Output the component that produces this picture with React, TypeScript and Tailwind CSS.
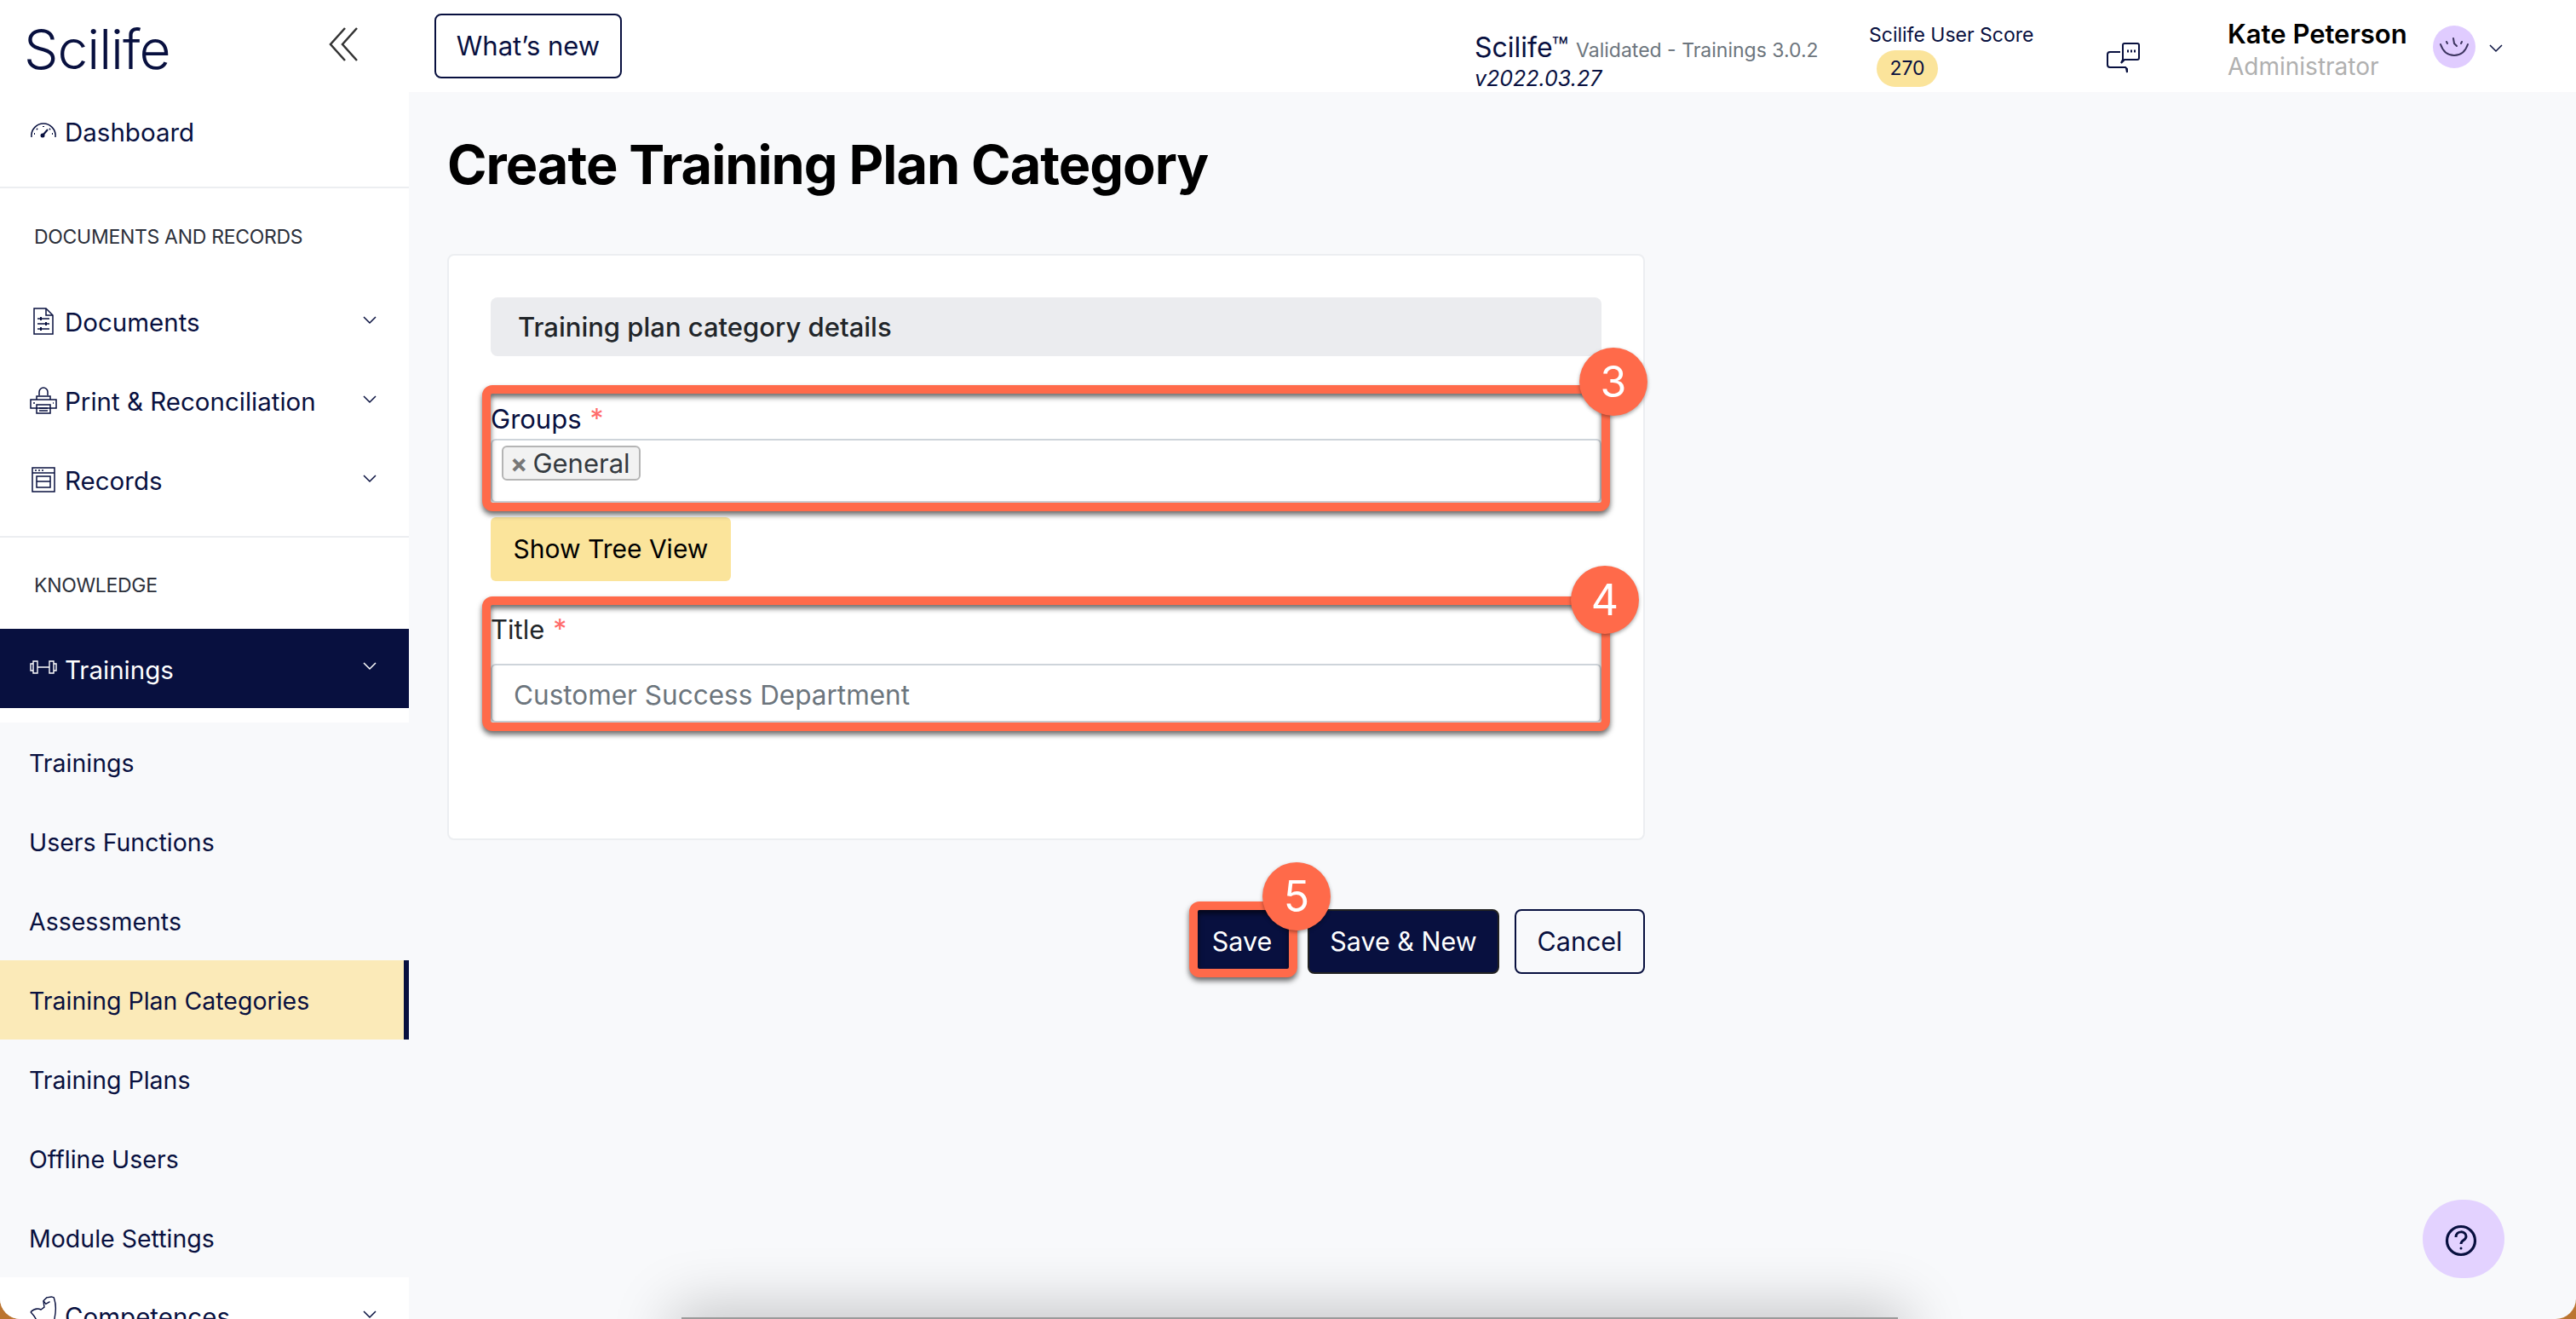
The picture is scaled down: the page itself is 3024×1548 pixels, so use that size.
import type { ReactNode } from "react";

const NAVY = "#08103f";

function Chevron({ className = "" }: { className?: string }) {
  return (
    <svg width="16" height="10" viewBox="0 0 16 10" fill="none" className={className}>
      <path d="M1 1l7 7 7-7" stroke="currentColor" strokeWidth="1.5" />
    </svg>
  );
}

function GaugeIcon() {
  return (
    <svg width="32" height="20" viewBox="0 0 32 20" fill="none" stroke={NAVY} strokeWidth="1.5">
      <path d="M2 18C1 9 8 2 16 2s15 7 14 16" />
      <path d="M15 16l6-7" strokeWidth="2" />
      <circle cx="15" cy="16" r="2.5" fill={NAVY} stroke="none" />
      <path d="M16 5v1M8 8l1 1M24 8l-1 1M5 14h1M26 14h1" strokeWidth="2" />
    </svg>
  );
}

function DocIcon() {
  return (
    <svg width="26" height="32" viewBox="0 0 26 32" fill="none" stroke={NAVY} strokeWidth="1.5">
      <path d="M2 1h14l8 8v22H2z" />
      <path d="M16 1v8h8" />
      <path d="M6 13h14M6 19h14M6 25h14" />
      <path d="M10 11v4M16 17v4M10 23v4" strokeWidth="2" />
    </svg>
  );
}

function PrinterIcon() {
  return (
    <svg width="32" height="32" viewBox="0 0 32 32" fill="none" stroke={NAVY} strokeWidth="1.5">
      <path d="M11 10V6a5 5 0 0 1 10 0v4" />
      <path d="M8 15v-4h16v4" />
      <path d="M1 15h30v10H1z" />
      <path d="M8 21h16v10H8z" />
      <path d="M4 19h2M27 19h1M11 25h10M11 28h10" />
    </svg>
  );
}

function RecordsIcon() {
  return (
    <svg width="28" height="30" viewBox="0 0 28 30" fill="none" stroke={NAVY} strokeWidth="1.5">
      <path d="M1 1h26v28H1z" />
      <path d="M1 7h26" />
      <path d="M4 4h2M8 4h2M12 4h2" />
      <path d="M6 11h16v6H6zM6 17h16v7H6z" />
    </svg>
  );
}

function DumbbellIcon() {
  return (
    <svg width="32" height="18" viewBox="0 0 32 18" fill="none" stroke="#fff" strokeWidth="1.4">
      <path d="M1 5h3v8H1zM4 2h5v14H4zM23 2h5v14h-5zM28 5h3v8h-3zM9 9h14" />
    </svg>
  );
}

function ArmIcon() {
  return (
    <svg width="34" height="34" viewBox="0 0 34 34" fill="none" stroke={NAVY} strokeWidth="1.5" className="-mt-[14px]">
      <path d="M1 20c4-4 9-5 13-3l4-3-1-8 4-4 6-1 3 1c3 8 3 18 0 30" />
      <path d="M17 6l3 4 5-3" />
      <path d="M1 20c3 3 6 6 8 12" />
    </svg>
  );
}

function ChatIcon() {
  return (
    <svg width="40" height="36" viewBox="0 0 40 36" fill="none" stroke={NAVY} strokeWidth="2">
      <path d="M16 11H4a3 3 0 0 0-3 3v12a3 3 0 0 0 3 3h18l2 2v4l-1-5" />
      <path d="M19 3a2 2 0 0 1 2-2h15a2 2 0 0 1 2 2v15a2 2 0 0 1-2 2H21l-4 4 2-4z" />
      <path d="M24 10h2M28 10h2M32 10h2" strokeWidth="3" />
    </svg>
  );
}

function SmileIcon() {
  return (
    <svg width="36" height="24" viewBox="0 0 36 24" fill="none" stroke="#3d3560" strokeWidth="2" strokeLinecap="round">
      <path d="M2 9c3 9 9 13 16 13s13-4 16-13" />
      <path d="M9 6l1 2M27 6l-1 2M17 2l1 6 3 3" />
    </svg>
  );
}

function Marker({ className }: { className: string }) {
  return (
    <div
      className={`absolute border-[10px] border-[#ff6a4a] rounded-[12px] drop-shadow-[0_4px_3px_rgba(0,0,0,0.6)] pointer-events-none ${className}`}
    />
  );
}

function Badge({ n, className }: { n: number; className: string }) {
  return (
    <div
      className={`absolute w-[80px] h-[80px] rounded-full bg-[#ff6a4a] text-white text-[50px] leading-none font-normal flex items-center justify-center shadow-[0_2px_4px_rgba(0,0,0,0.35)] ${className}`}
    >
      {n}
    </div>
  );
}

function NavRow({ icon, label, active }: { icon: ReactNode; label: string; active?: boolean }) {
  return (
    <div
      className={`h-[93px] flex items-center pl-[35px] pr-[38px] ${active ? "bg-[#08103f] text-white" : "text-[#08103f]"}`}
    >
      <span className="w-[32px] flex justify-center shrink-0 -mt-[4px]">{icon}</span>
      <span className={`ml-[9px] flex-1 text-[29.5px] ${active ? "pt-[3px]" : ""}`}>{label}</span>
      <Chevron className="-mt-[6px]" />
    </div>
  );
}

const subItems = [
  "Trainings",
  "Users Functions",
  "Assessments",
  "Training Plan Categories",
  "Training Plans",
  "Offline Users",
  "Module Settings",
];

function Sidebar() {
  return (
    <aside className="w-[480px] shrink-0 bg-white">
      <div className="h-[108px] flex items-start justify-between pl-[28px] pr-[60px] pt-[20px]">
        <span className="text-[64px] leading-[76px] font-light text-[#08103f] tracking-[-1px]">Scilife</span>
        <svg width="34" height="40" viewBox="0 0 34 40" fill="none" stroke="#333" strokeWidth="2.5" className="mt-[12px]">
          <path d="M19 1L2 20l17 19M33 1L16 20l17 19" />
        </svg>
      </div>
      <div className="h-[93px] flex items-center pl-[35px] text-[#08103f]">
        <span className="w-[32px] flex justify-center shrink-0 -mt-1">
          <GaugeIcon />
        </span>
        <span className="ml-[9px] text-[29.5px] pt-[2px]">Dashboard</span>
      </div>
      <div className="h-[20px] border-b-2 border-[#eceef1]" />
      <div className="h-[111px] pl-[40px] pt-[43px] text-[23px] leading-[28px] text-[#2b2f3a] tracking-[-0.3px]">
        DOCUMENTS AND RECORDS
      </div>
      <NavRow icon={<DocIcon />} label="Documents" />
      <NavRow icon={<PrinterIcon />} label="Print & Reconciliation" />
      <NavRow icon={<RecordsIcon />} label="Records" />
      <div className="h-[20px] border-b-2 border-[#eceef1]" />
      <div className="h-[107px] pl-[40px] pt-[42px] text-[23px] leading-[28px] text-[#2b2f3a] tracking-[-0.3px]">
        KNOWLEDGE
      </div>
      <NavRow icon={<DumbbellIcon />} label="Trainings" active />
      <div className="h-[17px]" />
      <div className="bg-[#f8f9fb]">
        {subItems.map((item) => (
          <div
            key={item}
            className={`h-[93px] flex items-center pl-[34px] pt-[4px] text-[28.5px] text-[#08103f] ${
              item === "Training Plan Categories" ? "bg-[#fbeab8] border-r-[6px] border-[#08103f]" : ""
            }`}
          >
            {item}
          </div>
        ))}
      </div>
      <NavRow icon={<ArmIcon />} label="Competences" />
    </aside>
  );
}

function Header() {
  return (
    <header className="h-[108px] bg-white flex items-start pl-[30px] pt-[16px] shrink-0">
      <button className="w-[220px] h-[76px] border-2 border-[#08103f] rounded-[8px] text-[31px] text-[#08103f]">
        What’s new
      </button>
      <div className="ml-[1001px] w-[463px] -mt-[16px] pt-[38px] text-[#08103f]">
        <div className="text-[32px] leading-[36px] whitespace-nowrap">
          Scilife™ <span className="text-[23px] text-[#6c757d]">Validated - Trainings 3.0.2</span>
        </div>
        <div className="text-[25px] leading-[30px] italic">v2022.03.27</div>
      </div>
      <div className="-mt-[16px] pt-[26px] w-[279px] text-[#08103f]">
        <div className="text-[23px] leading-[30px] whitespace-nowrap">Scilife User Score</div>
        <div className="ml-[9px] mt-[3px] w-[72px] h-[43px] rounded-full bg-[#fbe49b] text-[23px] flex items-center justify-center">
          270
        </div>
      </div>
      <div className="-mt-[16px] pt-[50px] w-[142px]">
        <ChatIcon />
      </div>
      <div className="-mt-[16px] pt-[20px] w-[241px]">
        <div className="text-[31px] leading-[40px] font-semibold text-black whitespace-nowrap">Kate Peterson</div>
        <div className="text-[28px] leading-[36px] text-[#b0b0b0]">Administrator</div>
      </div>
      <div className="-mt-[16px] pt-[30px]">
        <div className="w-[50px] h-[50px] rounded-full bg-[#e0ccff] flex items-center justify-center">
          <SmileIcon />
        </div>
      </div>
      <Chevron className="mt-[36px] ml-[16px] text-[#08103f]" />
    </header>
  );
}

function Star() {
  return <span className="ml-[10px] text-[32px] leading-none text-[#ff6b6b]">*</span>;
}

function Form() {
  return (
    <div className="w-[1406px] h-[688px] bg-white border-2 border-[#eceef1] rounded-[8px] pt-[49px] px-[49px]">
      <div className="h-[69px] bg-[#ebecef] rounded-[8px] flex items-center pl-[32px] pt-[1px] text-[31px] font-medium text-[#212529]">
        Training plan category details
      </div>
      <div className="relative mt-[57px]">
        <Marker className="-left-[10px] -top-[23px] w-[1324px] h-[148px]" />
        <Badge n={3} className="left-[1278px] -top-[67px]" />
        <div className="h-[34px] text-[31px] leading-[34px] text-[#08103f]">
          Groups
          <Star />
        </div>
        <div className="mt-[6px] h-[75px] border-2 border-[#ced4da] rounded-[6px] bg-white pt-[6px] pl-[11px]">
          <span className="inline-flex items-center h-[41px] w-[163px] border-2 border-[#b5b5b5] rounded-[6px] bg-[#f2f2f2] pl-[8px] pt-[1px] text-[31px] text-[#343a40]">
            <span className="text-[#777] text-[30px] font-bold mr-[6px]">×</span>
            General
          </span>
        </div>
      </div>
      <button className="block mt-[17px] w-[282px] h-[75px] bg-[#fbe49b] rounded-[6px] text-[30px] text-black">
        Show Tree View
      </button>
      <div className="relative mt-[40px]">
        <Marker className="-left-[10px] -top-[22px] w-[1324px] h-[158px]" />
        <Badge n={4} className="left-[1268px] -top-[58px]" />
        <div className="h-[34px] text-[31px] leading-[34px] text-[#212529]">
          Title
          <Star />
        </div>
        <div className="mt-[23px] h-[69px] border-2 border-[#ced4da] rounded-[6px] bg-white flex items-center pl-[25px] pt-[5px] text-[31.5px] text-[#6c757d]">
          Customer Success Department
        </div>
      </div>
    </div>
  );
}

export default function App() {
  return (
    <div className="w-[3024px] h-[1548px] bg-[#bb7430] overflow-hidden font-['Inter',sans-serif]">
      <div className="relative w-full h-full flex rounded-b-[24px] overflow-hidden bg-[#f8f9fb]">
        <Sidebar />
        <main className="flex-1 flex flex-col min-w-0">
          <Header />
          <div className="pl-[45px]">
            <h1 className="mt-[45px] h-[80px] text-[63px] leading-[80px] font-bold text-black tracking-[-1px]">
              Create Training Plan Category
            </h1>
            <div className="mt-[65px]">
              <Form />
            </div>
            <div className="w-[1406px] mt-[81px] flex justify-end gap-[18px] text-[30.5px]">
              <div className="relative">
                <button className="w-[118px] h-[76px] bg-[#08103f] text-white rounded-[8px]">Save</button>
                <Marker className="-left-[3px] -top-[9px] w-[127px] h-[89px]" />
                <Badge n={5} className="left-[83px] -top-[55px]" />
              </div>
              <button className="w-[225px] h-[76px] bg-[#08103f] text-white rounded-[8px] border-2 border-[#222]">
                Save &amp; New
              </button>
              <button className="w-[153px] h-[76px] border-2 border-[#08103f] text-[#08103f] rounded-[8px]">
                Cancel
              </button>
            </div>
          </div>
        </main>
        {/* help button and the shadow of something just below the fold */}
        <div className="absolute left-[2844px] top-[1408px] w-[96px] h-[92px] rounded-full bg-[#e3d2ff] flex items-center justify-center">
          <svg width="38" height="38" viewBox="0 0 38 38" fill="none" stroke={NAVY} strokeWidth="3.2" className="-ml-[6px] mt-[4px]">
            <circle cx="19" cy="19" r="16.5" />
            <path d="M13 15c0-8 12-8 12-1 0 5-6 4-6 9" strokeWidth="3" />
            <circle cx="19" cy="28" r="1.5" fill={NAVY} stroke="none" />
          </svg>
        </div>
        <div className="absolute left-[800px] top-[1546px] w-[1428px] h-[60px] bg-[#9a9a9a] shadow-[0_0_70px_10px_rgba(0,0,0,0.22)]" />
      </div>
    </div>
  );
}
